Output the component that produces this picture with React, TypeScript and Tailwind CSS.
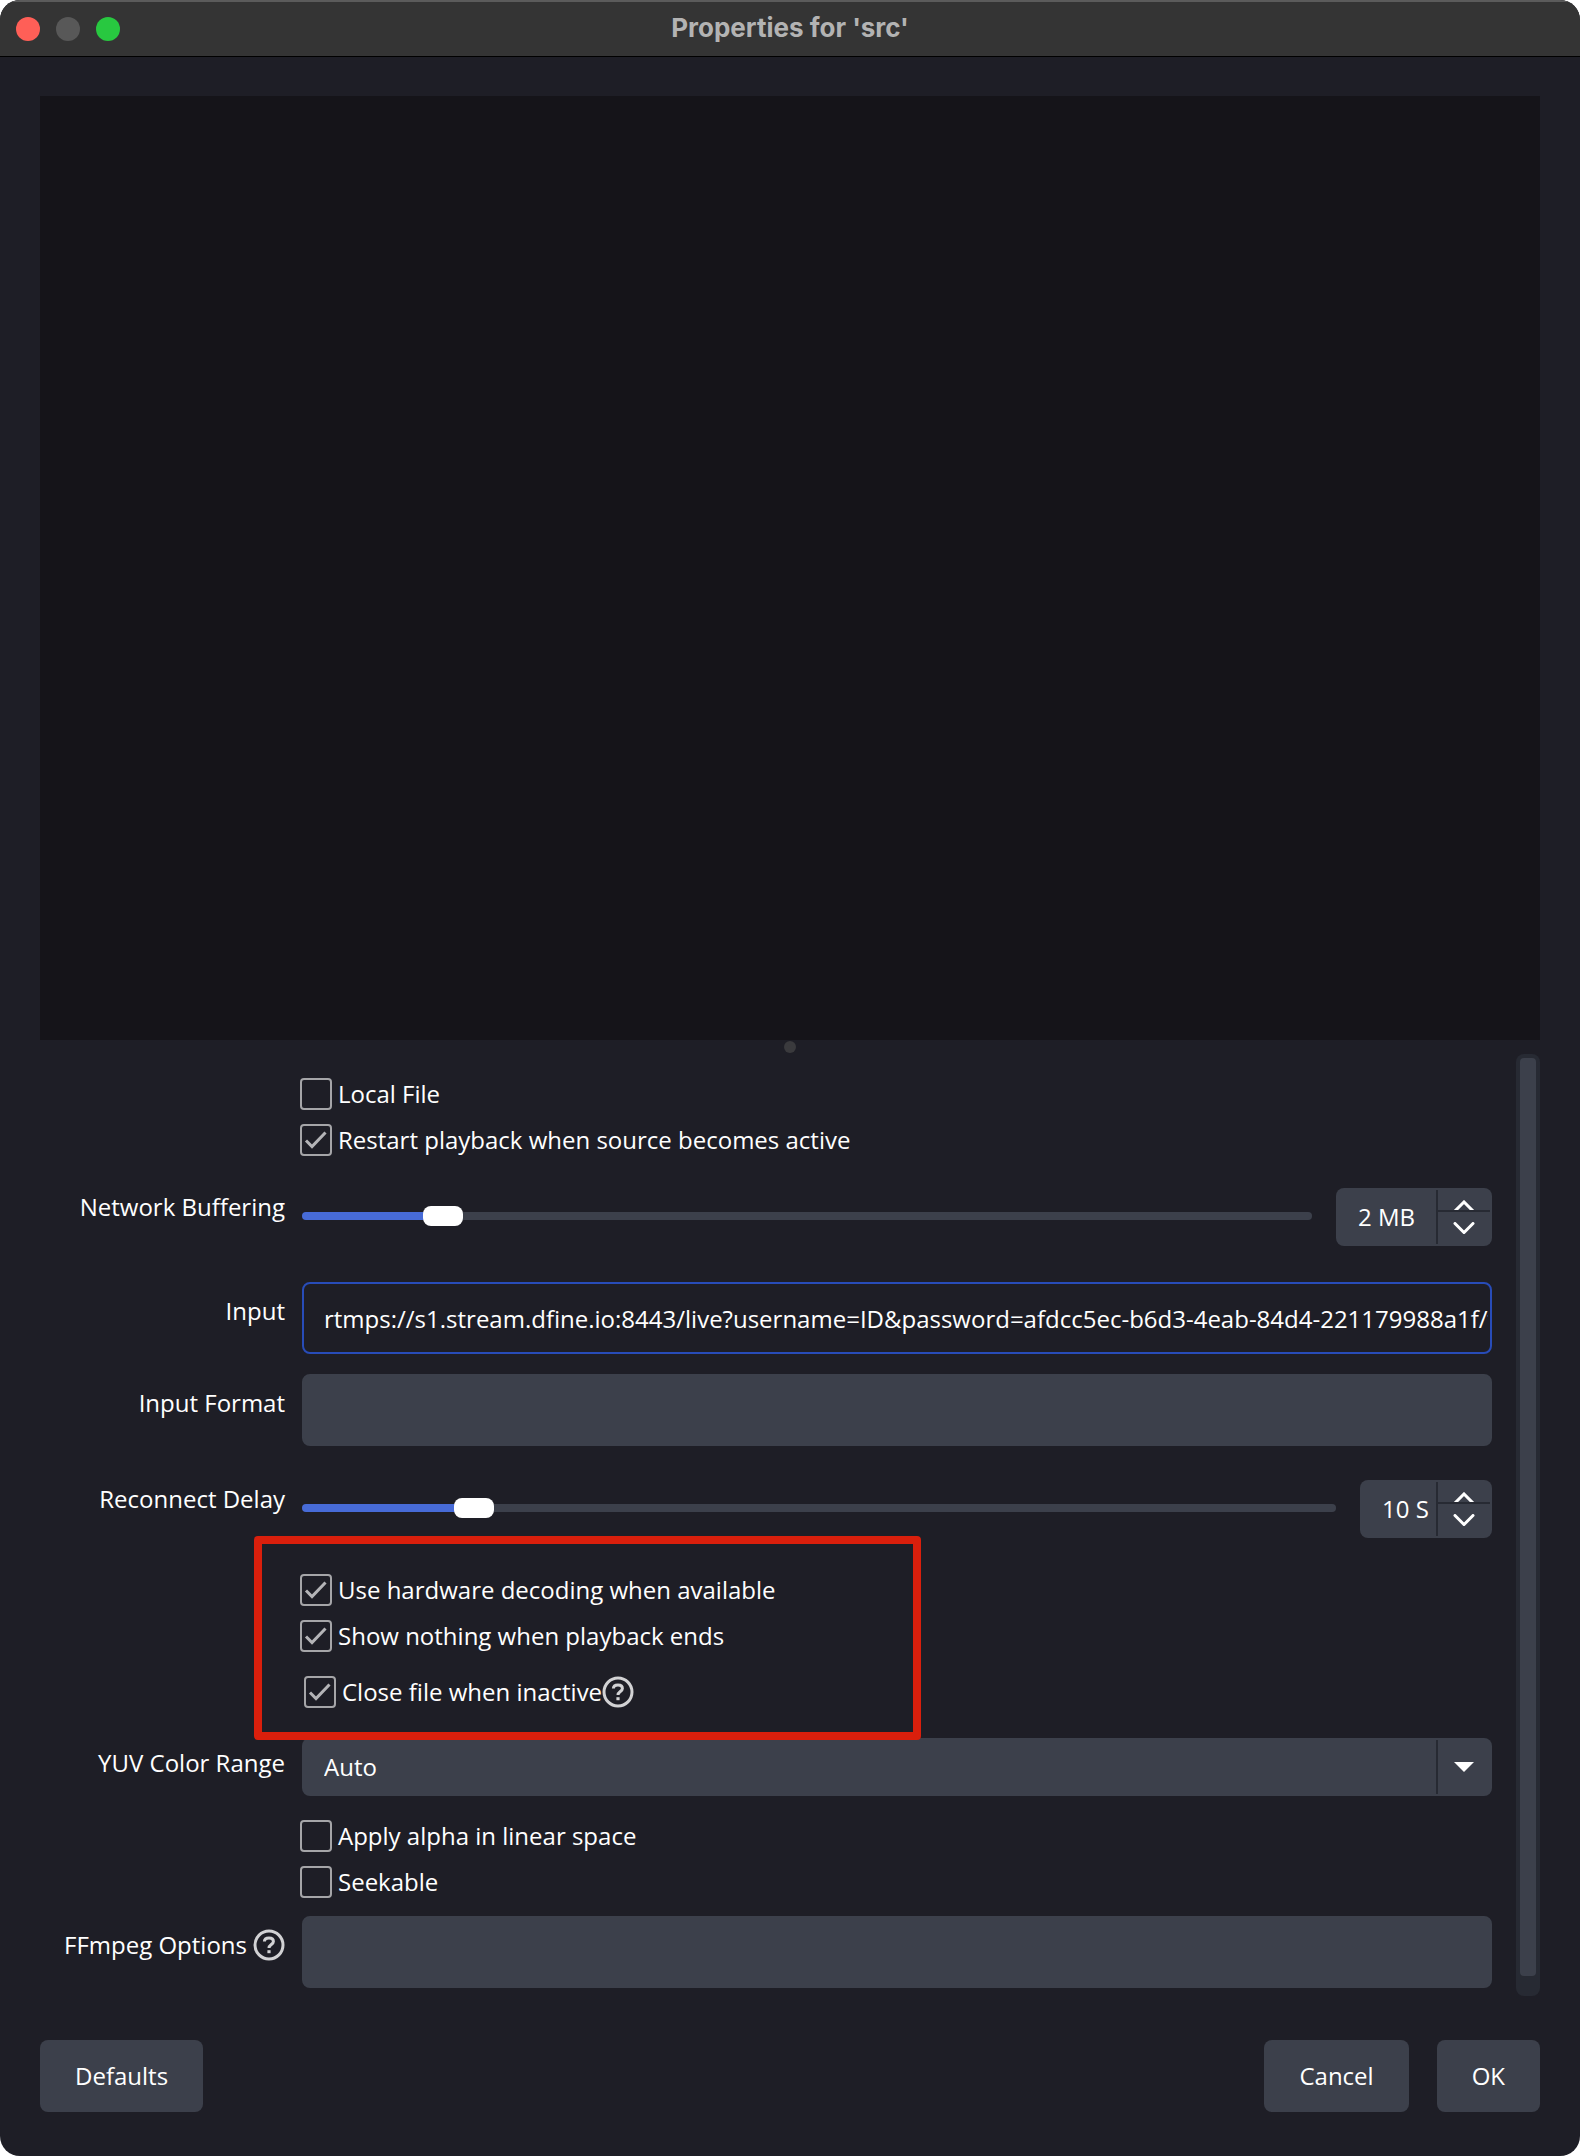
import { useId, useState } from "react";
import type { ReactNode } from "react";

const fieldClass = "h-[72px] w-full rounded-lg border-2 pl-5 pr-0.5 outline-none";
const buttonClass = "h-[72px] rounded-lg bg-[#3c404b] px-[35px] hover:bg-[#4b5060]";

function HelpIcon() {
  return (
    <svg viewBox="0 0 32 32" className="size-8 shrink-0" fill="none" stroke="#d2d2d4" aria-hidden="true">
      <circle cx="16" cy="16" r="14" strokeWidth="3" />
      <path d="M11.400 12.600c0-2.200 1.800-3.700 4.600-3.700s4.400 1.500 4.400 3.500c0 3-4.400 3.200-4.400 6.600" strokeWidth="3" />
      <path d="M16 21.200v3" strokeWidth="3.200" />
    </svg>
  );
}

type CheckRowProps = {
  label: string;
  defaultChecked?: boolean;
  help?: boolean;
};

function CheckRow({ label, defaultChecked = false, help = false }: CheckRowProps) {
  return (
    <label className="flex h-8 w-fit items-center">
      <span className="relative mr-1.5 size-8">
        <input
          type="checkbox"
          defaultChecked={defaultChecked}
          className="peer block size-8 appearance-none rounded border-2 border-[#a5a5a8] outline-none"
        />
        <svg
          viewBox="0 0 32 32"
          className="pointer-events-none absolute inset-0 hidden size-8 peer-checked:block"
          fill="none"
          stroke="#b4b4b7"
          strokeWidth="3"
          aria-hidden="true"
        >
          <path d="M6 16.500l6 6L25.500 8.500" />
        </svg>
      </span>
      {label}
      {help && <HelpIcon />}
    </label>
  );
}

type FormRowProps = {
  label: string;
  htmlFor: string;
  labelClass: string;
  help?: boolean;
  children: ReactNode;
};

function FormRow({ label, htmlFor, labelClass, help = false, children }: FormRowProps) {
  return (
    <div className="flex gap-[17px]">
      <label htmlFor={htmlFor} className={`flex w-[245px] shrink-0 items-start justify-end gap-1.5 ${labelClass}`}>
        {label}
        {help && <HelpIcon />}
      </label>
      <div className="min-w-0 flex-1">{children}</div>
    </div>
  );
}

type SliderRowProps = {
  label: string;
  unit: string;
  min: number;
  max: number;
  initial: number;
  spinClass: string;
};

function SliderRow({ label, unit, min, max, initial, spinClass }: SliderRowProps) {
  const id = useId();
  const [value, setValue] = useState(initial);
  const percent = ((value - min) / (max - min)) * 100;
  const step = (delta: number) => setValue((current) => Math.min(max, Math.max(min, current + delta)));

  return (
    <FormRow label={label} htmlFor={id} labelClass="pt-[3px]">
      <div className="flex h-[58px] items-center gap-6">
        <input
          id={id}
          type="range"
          min={min}
          max={max}
          value={value}
          onChange={(e) => setValue(Number(e.target.value))}
          className="mb-0.5 h-2 min-w-0 flex-1 appearance-none rounded-full outline-none [&::-webkit-slider-thumb]:h-5 [&::-webkit-slider-thumb]:w-10 [&::-webkit-slider-thumb]:appearance-none [&::-webkit-slider-thumb]:rounded-lg [&::-webkit-slider-thumb]:bg-white"
          style={{ background: `linear-gradient(to right, #476bd7 ${percent + 2}%, #3c404b ${percent + 2}%)` }}
        />
        <div className={`flex h-[58px] rounded-lg bg-[#3c404b] p-0.5 ${spinClass}`}>
          <input
            type="text"
            readOnly
            aria-label={`${label} value`}
            value={`${value} ${unit}`}
            className="w-0 flex-1 bg-transparent pl-5 outline-none"
          />
          <div className="flex w-[54px] flex-col border-l-2 border-[#272a33]">
            <button
              type="button"
              aria-label={`Increase ${label}`}
              onClick={() => step(1)}
              className="flex h-[22px] justify-center overflow-hidden border-b-2 border-[#272a33] pt-2.5"
            >
              <svg viewBox="0 0 22 12" className="h-3 w-[22px] shrink-0" fill="none" stroke="#fff" strokeWidth="3">
                <path d="M1 12L11 2l10 10" />
              </svg>
            </button>
            <button
              type="button"
              aria-label={`Decrease ${label}`}
              onClick={() => step(-1)}
              className="flex flex-1 items-center justify-center"
            >
              <svg viewBox="0 0 22 12" className="h-3 w-[22px] shrink-0" fill="none" stroke="#fff" strokeWidth="3" strokeLinecap="round">
                <path d="M2 1.500l9 9 9-9" />
              </svg>
            </button>
          </div>
        </div>
      </div>
    </FormRow>
  );
}

export default function App() {
  return (
    <div className="flex min-h-screen flex-col overflow-hidden rounded-[20px] bg-[#1e1e26] font-['Open_Sans',sans-serif] text-[24px] leading-8 text-white">
      <header className="grid h-[57px] grid-cols-[1fr_auto_1fr] items-center border-t-2 border-b border-t-[#5b5b5b] border-b-black bg-[#343434] px-4">
        <div className="flex gap-4">
          <button type="button" aria-label="Close" className="size-6 rounded-full bg-[#ff5f57]" />
          <button type="button" aria-label="Minimize" disabled className="size-6 rounded-full bg-[#585858]" />
          <button type="button" aria-label="Zoom" className="size-6 rounded-full bg-[#28c840]" />
        </div>
        <h1 className="pb-0.5 font-['Inter',sans-serif] text-[26px] leading-8 font-bold text-[#b3b3b3]">
          Properties for 'src'
        </h1>
      </header>

      <main className="flex flex-1 flex-col px-10 pt-[39px] pb-11">
        <div className="min-h-[300px] flex-1 bg-[#151419]" />
        <div className="flex h-3.5 items-center justify-center">
          <span className="size-3 rounded-full bg-[#3a3a3d]" />
        </div>

        <div className="flex gap-6">
          <form className="min-w-0 flex-1 pt-6 pb-2">
            <div className="ml-[260px] flex flex-col gap-3.5">
              <CheckRow label="Local File" />
              <CheckRow label="Restart playback when source becomes active" defaultChecked />
            </div>

            <div className="mt-8">
              <SliderRow label="Network Buffering" unit="MB" min={0} max={16} initial={2} spinClass="w-[156px]" />
            </div>

            <div className="mt-9 flex flex-col gap-5">
              <FormRow label="Input" htmlFor="input" labelClass="pt-[13px]">
                <input
                  id="input"
                  type="text"
                  defaultValue="rtmps://s1.stream.dfine.io:8443/live?username=ID&password=afdcc5ec-b6d3-4eab-84d4-221179988a1f/t"
                  className={`${fieldClass} border-[#284cb8] bg-transparent`}
                />
              </FormRow>
              <FormRow label="Input Format" htmlFor="input-format" labelClass="pt-[13px]">
                <input id="input-format" type="text" className={`${fieldClass} border-[#3c404b] bg-[#3c404b]`} />
              </FormRow>
            </div>

            <div className="mt-[34px]">
              <SliderRow label="Reconnect Delay" unit="S" min={1} max={60} initial={10} spinClass="w-[132px]" />
            </div>

            <div className="relative mt-9">
              <div className="ml-[260px] flex flex-col gap-3.5">
                <CheckRow label="Use hardware decoding when available" defaultChecked />
                <CheckRow label="Show nothing when playback ends" defaultChecked />
              </div>
              <div className="mt-6 ml-[264px]">
                <CheckRow label="Close file when inactive" defaultChecked help />
              </div>
              {/* highlight around the recommended options */}
              <div className="pointer-events-none absolute -top-[38px] -bottom-8 left-[214px] z-10 w-[667px] rounded border-8 border-[#da1f0c]" />
            </div>

            <div className="mt-[30px]">
              <FormRow label="YUV Color Range" htmlFor="yuv" labelClass="pt-[9px]">
                <div className="relative h-[58px] rounded-lg bg-[#3c404b]">
                  <select id="yuv" className="h-full w-full appearance-none rounded-lg bg-transparent pl-[22px] outline-none">
                    <option>Auto</option>
                    <option>Partial</option>
                    <option>Full</option>
                  </select>
                  <div className="pointer-events-none absolute inset-y-0.5 right-0.5 flex w-[54px] items-center justify-center border-l-2 border-[#272a33]">
                    <svg viewBox="0 0 20 10" className="h-2.5 w-5" fill="#fff" aria-hidden="true">
                      <path d="M0 0h20L10 10z" />
                    </svg>
                  </div>
                </div>
              </FormRow>
            </div>

            <div className="mt-6 ml-[260px] flex flex-col gap-3.5">
              <CheckRow label="Apply alpha in linear space" />
              <CheckRow label="Seekable" />
            </div>

            <div className="mt-[18px]">
              <FormRow label="FFmpeg Options" htmlFor="ffmpeg" labelClass="pt-[13px]" help>
                <input id="ffmpeg" type="text" className={`${fieldClass} border-[#3c404b] bg-[#3c404b]`} />
              </FormRow>
            </div>
          </form>

          <div className="flex w-6 flex-col rounded-lg bg-[#272a33] px-1 pt-1 pb-5">
            <div className="flex-1 rounded bg-[#3c404b]" />
          </div>
        </div>

        <footer className="mt-11 flex gap-7">
          <button type="button" className={`${buttonClass} mr-auto`}>
            Defaults
          </button>
          <button type="button" className={buttonClass}>
            Cancel
          </button>
          <button type="button" className={buttonClass}>
            OK
          </button>
        </footer>
      </main>
    </div>
  );
}
